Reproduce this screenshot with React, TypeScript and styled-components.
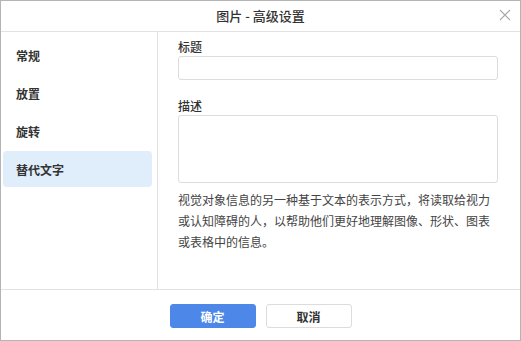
import React from "react";
import styled, { createGlobalStyle } from "styled-components";

const Global = createGlobalStyle`
  html, body { margin: 0; padding: 0; background: #fff; }
  * { box-sizing: border-box; }
  body { font-family: "Noto Sans CJK SC", "Noto Sans", sans-serif; color: #333; }
`;

const Dialog = styled.div`
  width: 521px;
  height: 341px;
  border: 1px solid #b4b4b4;
  background: #fff;
  display: flex;
  flex-direction: column;
`;

const Header = styled.div`
  height: 31px;
  flex: none;
  border-bottom: 1px solid #e2e2e2;
  display: flex;
  align-items: center;
  justify-content: center;
  position: relative;
`;

const Title = styled.div`
  font-size: 13px;
  font-weight: 500;
  color: #333;
  line-height: 30px;
`;

const Close = styled.button`
  position: absolute;
  right: 9px;
  top: 8px;
  width: 12px;
  height: 12px;
  padding: 0;
  border: 0;
  background: none;
  display: flex;
`;

const Body = styled.div`
  flex: 1;
  display: flex;
  min-height: 0;
`;

const Sidebar = styled.div`
  width: 157px;
  flex: none;
  border-right: 1px solid #e2e2e2;
  padding: 5px 5px 0 2px;
  display: flex;
  flex-direction: column;
  gap: 2px;
`;

const NavItem = styled.div<{ $active?: boolean }>`
  height: 36px;
  border-radius: 4px;
  padding-left: 13px;
  display: flex;
  align-items: center;
  font-size: 12px;
  font-weight: 700;
  color: #333;
  background: ${(p) => (p.$active ? "#e0edfb" : "transparent")};
`;

const Content = styled.div`
  flex: 1;
  padding: 6px 22px 0 20px;
  display: flex;
  flex-direction: column;
`;

const Label = styled.div<{ $top?: number }>`
  font-size: 12px;
  font-weight: 500;
  line-height: 18px;
  color: #333;
  margin-top: ${(p) => p.$top ?? 0}px;
`;

const Input = styled.div`
  height: 24px;
  border: 1px solid #dcdcdc;
  border-radius: 3px;
`;

const TextArea = styled.div`
  height: 68px;
  border: 1px solid #dcdcdc;
  border-radius: 3px;
`;

const Desc = styled.div`
  margin-top: 6px;
  font-size: 12px;
  line-height: 21px;
  color: #444;
`;

const Footer = styled.div`
  height: 51px;
  flex: none;
  border-top: 1px solid #e2e2e2;
  display: flex;
  justify-content: center;
  align-items: flex-start;
  padding-top: 14px;
  gap: 10px;
`;

const Button = styled.button<{ $primary?: boolean }>`
  width: 86px;
  height: 24px;
  border-radius: 3px;
  font-family: inherit;
  font-size: 12px;
  font-weight: 700;
  padding: 0;
  border: 1px solid ${(p) => (p.$primary ? "#4d88e8" : "#dcdcdc")};
  background: ${(p) => (p.$primary ? "#4d88e8" : "#fff")};
  color: ${(p) => (p.$primary ? "#fff" : "#333")};
`;

export default function App() {
  return (
    <>
      <Global />
      <Dialog>
        <Header>
          <Title>图片 - 高级设置</Title>
          <Close aria-label="关闭">
            <svg width="12" height="12" viewBox="0 0 12 12">
              <path d="M1 1L11 11M11 1L1 11" stroke="#a8a8a8" strokeWidth="1.1" fill="none" />
            </svg>
          </Close>
        </Header>
        <Body>
          <Sidebar>
            <NavItem>常规</NavItem>
            <NavItem>放置</NavItem>
            <NavItem>旋转</NavItem>
            <NavItem $active>替代文字</NavItem>
          </Sidebar>
          <Content>
            <Label>标题</Label>
            <Input />
            <Label $top={17}>描述</Label>
            <TextArea />
            <Desc>
              视觉对象信息的另一种基于文本的表示方式，将读取给视力
              <br />
              或认知障碍的人，以帮助他们更好地理解图像、形状、图表
              <br />
              或表格中的信息。
            </Desc>
          </Content>
        </Body>
        <Footer>
          <Button $primary>确定</Button>
          <Button>取消</Button>
        </Footer>
      </Dialog>
    </>
  );
}
